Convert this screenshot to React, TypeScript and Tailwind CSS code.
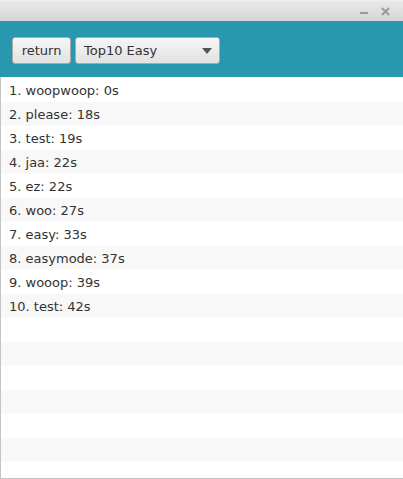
import * as React from "react";

const scores = [
  "1. woopwoop: 0s",
  "2. please: 18s",
  "3. test: 19s",
  "4. jaa: 22s",
  "5. ez: 22s",
  "6. woo: 27s",
  "7. easy: 33s",
  "8. easymode: 37s",
  "9. wooop: 39s",
  "10. test: 42s",
];

const rows = [...scores, "", "", "", "", "", "", ""];

export default function App() {
  return (
    <div className="flex h-[479px] w-[403px] flex-col overflow-hidden bg-white font-['DejaVu_Sans',sans-serif] text-[13px] text-[#333]">
      {/* title bar */}
      <div className="flex h-[21px] shrink-0 items-center justify-end gap-[13px] border-t border-[#f0f0f0] bg-gradient-to-b from-[#e8e8e8] to-[#d6d6d6] pr-[12px]">
        <span className="mt-[4px] block h-[2px] w-[8px] bg-[#9a9a9a]" />
        <svg width="9" height="9" viewBox="0 0 9 9" className="mr-[1px]">
          <path d="M1 1L8 8M8 1L1 8" stroke="#9a9a9a" strokeWidth="2" />
        </svg>
      </div>

      {/* toolbar */}
      <div className="flex h-[56px] shrink-0 items-center gap-[3px] bg-[#2798ad] pl-[12px] pt-[2px]">
        <button className="h-[27px] w-[59px] rounded-[3px] border border-[#a9a9a9] bg-gradient-to-b from-[#f6f6f6] to-[#e2e2e2] pt-[1px] text-[13px] text-[#333] shadow-[inset_0_1px_0_#fff]">
          return
        </button>
        <div className="ml-[1px] flex h-[27px] w-[145px] items-center justify-between rounded-[3px] border border-[#a9a9a9] bg-gradient-to-b from-[#f6f6f6] to-[#e2e2e2] pl-[8px] pr-[7px] pt-[1px] shadow-[inset_0_1px_0_#fff]">
          <span>Top10 Easy</span>
          <svg width="10" height="6" viewBox="0 0 10 6">
            <path d="M0 0H10L5 6Z" fill="#555" />
          </svg>
        </div>
      </div>

      {/* list */}
      <div className="flex flex-1 flex-col overflow-hidden border-b border-l border-[#c4c4c4] pt-[1px]">
        {rows.map((r, i) => (
          <div
            key={i}
            className={
              i % 2 === 0
                ? "flex h-[24px] shrink-0 items-center bg-white pl-[8px] pt-[1px]"
                : "flex h-[24px] shrink-0 items-center bg-[#f8f8f8] pl-[8px] pt-[1px]"
            }
          >
            {r}
          </div>
        ))}
      </div>
    </div>
  );
}
